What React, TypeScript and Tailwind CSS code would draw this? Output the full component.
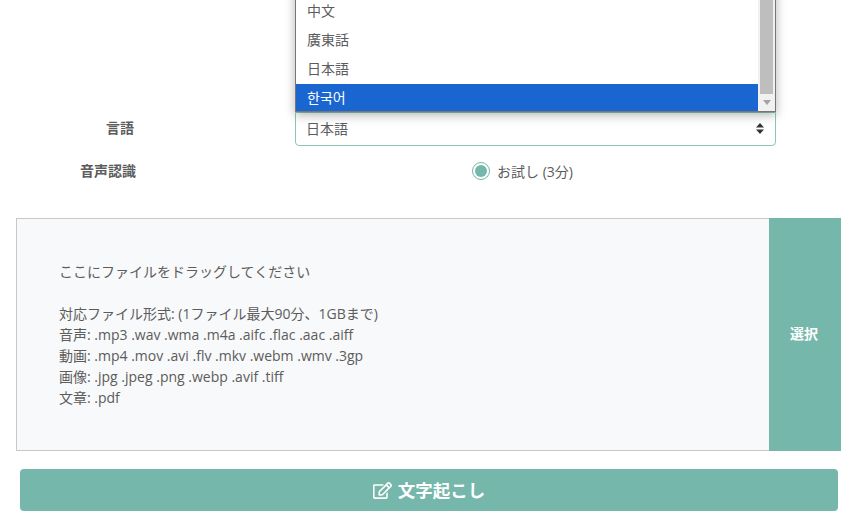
import { FaRegEdit } from "react-icons/fa";

const languages = ["中文", "廣東話", "日本語", "한국어"];
const fileTypes = [
  "対応ファイル形式: (1ファイル最大90分、1GBまで)",
  "音声: .mp3 .wav .wma .m4a .aifc .flac .aac .aiff",
  "動画: .mp4 .mov .avi .flv .mkv .webm .wmv .3gp",
  "画像: .jpg .jpeg .png .webp .avif .tiff",
  "文章: .pdf",
];

const font = "font-['Open_Sans','Noto_Sans_CJK_JP',sans-serif]";

function LanguageMenu() {
  return (
    <div className="absolute left-[-1px] right-[-1px] bottom-[calc(100%+1px)] flex h-[140px] border border-[#767676] border-t-0 bg-white shadow-[0_3px_10px_rgba(0,0,0,0.3)]">
      <ul className="flex flex-1 flex-col justify-end">
        {languages.map((lang, i) => (
          <li
            key={lang}
            className={
              i === 3
                ? "flex h-[27px] items-center bg-[#1a66d1] pl-[11px] text-white"
                : "flex h-[29px] items-center pb-[2px] pl-[11px] text-[#5c5c5c]"
            }
          >
            {lang}
          </li>
        ))}
      </ul>
      <div className="flex w-[17px] flex-col bg-[#f1f1f1] px-[2px]">
        <div className="flex-1 bg-[#bebebe]" />
        <div className="flex h-[17px] items-center justify-center">
          <svg width="8" height="5" viewBox="0 0 8 5">
            <path d="M0 0h8L4 5z" fill="#a3a3a3" />
          </svg>
        </div>
      </div>
    </div>
  );
}

export default function App() {
  return (
    <div className={`h-[523px] w-[858px] overflow-hidden bg-white text-[14px] text-[#5c5c5c] ${font}`}>
      {/* language */}
      <div className="flex h-[34px] mt-[112px] items-center">
        <label className="w-[295px] pb-[4px] pl-[106px] font-bold">言語</label>
        <div className="relative flex h-[34px] w-[481px] items-center justify-between rounded-b-[4px] border border-[#8cc5ba] pb-[2px] pl-[10px] pr-[11px]">
          <span>日本語</span>
          <svg width="8" height="11" viewBox="0 0 8 11">
            <path d="M4 0 8 4.5H0zM4 11 0 6.5H8z" fill="#333" />
          </svg>
          <LanguageMenu />
        </div>
      </div>

      {/* recognition */}
      <div className="mt-[11px] flex h-[28px] items-center">
        <label className="w-[472px] pb-[2px] pl-[80px] font-bold">音声認識</label>
        <span className="flex h-[18px] w-[18px] items-center justify-center rounded-full border border-[#76b7ab]">
          <span className="h-[12px] w-[12px] rounded-full bg-[#76b7ab]" />
        </span>
        <span className="ml-[7px]">お試し (3分)</span>
      </div>

      {/* drop zone */}
      <div className="ml-[16px] mt-[33px] flex h-[233px] w-[825px]">
        <div className="flex flex-1 flex-col justify-center border border-r-0 border-[#c8c8c8] bg-[#f8f9fa] pb-[1px] pl-[42px] leading-[21px]">
          <p className="mb-[21px]">ここにファイルをドラッグしてください</p>
          {fileTypes.map((line) => (
            <p key={line}>{line}</p>
          ))}
        </div>
        <div className="flex w-[72px] items-center justify-center bg-[#76b7ab] pb-[2px] pr-[2px] font-bold text-white">
          選択
        </div>
      </div>

      {/* submit */}
      <button className="ml-[20px] mt-[18px] flex h-[42px] w-[818px] items-center justify-center gap-[6px] rounded-[4px] bg-[#76b7ab] text-[17.5px] font-bold text-white">
        <FaRegEdit className="text-[19px]" />
        文字起こし
      </button>
    </div>
  );
}
